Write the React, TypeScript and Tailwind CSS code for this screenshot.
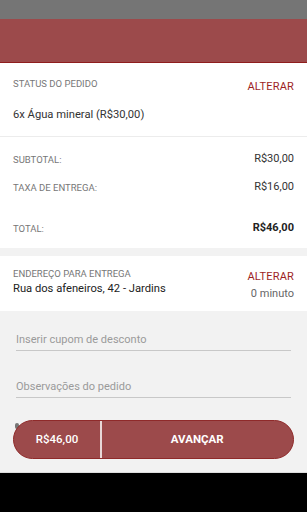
import React from "react";

export default function App() {
  return (
    <div
      className="w-[307px] h-[512px] bg-[#f2f2f2] flex flex-col overflow-hidden"
      style={{ fontFamily: "Roboto, 'Liberation Sans', sans-serif" }}
    >
      <div className="h-[19px] bg-[#757575] shrink-0" />
      <div className="h-[44px] bg-[#9c4a4b] border-b-[1.5px] border-[#8f1d1d] shrink-0" />
      {/* Status section */}
      <div className="bg-white px-[13px] shrink-0">
        <div className="flex justify-between items-start pt-[15px]">
          <span className="text-[9.5px] text-[#777] leading-[12px]">STATUS DO PEDIDO</span>
          <span className="text-[11px] text-[#9e1f1f] leading-[12px] mt-[3px] tracking-[0.2px]">ALTERAR</span>
        </div>
        <div className="text-[11.2px] text-[#333] leading-[14px] mt-[15px] pb-[14px]">6x Água mineral (R$30,00)</div>
      </div>
      <div className="h-px bg-[#ececec] shrink-0" />
      {/* Totals */}
      <div className="bg-white px-[13px] pt-[14px] pb-[12px] shrink-0">
        <div className="flex justify-between items-center h-[16px]">
          <span className="text-[9.5px] text-[#777] mt-[3px]">SUBTOTAL:</span>
          <span className="text-[11px] text-[#333]">R$30,00</span>
        </div>
        <div className="flex justify-between items-center h-[16px] mt-[12px]">
          <span className="text-[9.5px] text-[#777] mt-[3px]">TAXA DE ENTREGA:</span>
          <span className="text-[11px] text-[#333]">R$16,00</span>
        </div>
        <div className="flex justify-between items-center h-[16px] mt-[25px]">
          <span className="text-[9.5px] text-[#777] mt-[2px]">TOTAL:</span>
          <span className="text-[11px] text-[#222] font-bold">R$46,00</span>
        </div>
      </div>
      <div className="h-[8px] shrink-0" />
      {/* Address */}
      <div className="bg-white px-[13px] pt-[12px] pb-[11px] flex justify-between shrink-0">
        <div className="flex flex-col">
          <span className="text-[9.5px] text-[#777] leading-[12px]">ENDEREÇO PARA ENTREGA</span>
          <span className="text-[11.2px] text-[#222] leading-[14px] mt-[2px]">Rua dos afeneiros, 42 - Jardins</span>
        </div>
        <div className="flex flex-col items-end">
          <span className="text-[11px] text-[#9e1f1f] leading-[13px] mt-[2px] tracking-[0.2px]">ALTERAR</span>
          <span className="text-[11px] text-[#666] leading-[13px] mt-[4px]">0 minuto</span>
        </div>
      </div>
      {/* Inputs */}
      <div className="px-[16px] pt-[22px] flex flex-col shrink-0">
        <div className="border-b border-[#c8c8c8] pb-[3px] text-[11px] text-[#9a9a9a] leading-[14px]">
          Inserir cupom de desconto
        </div>
        <div className="border-b border-[#c8c8c8] pb-[3px] text-[11px] text-[#9a9a9a] leading-[14px] mt-[29px]">
          Observações do pedido
        </div>
      </div>
      <div className="relative px-[13px] mt-[22px] shrink-0">
        <div className="absolute left-[15px] top-[3px] w-[4px] h-[6px] bg-[#777] rounded-sm" />
        <div className="relative flex h-[39px] w-[281px] rounded-full overflow-hidden border border-[#8f2a2a] bg-[#9c4a4b]">
          <div className="w-[86px] flex items-center justify-center text-white text-[11.5px] font-medium">
            R$46,00
          </div>
          <div className="w-[1.5px] bg-[#e8d8d8]" />
          <div className="flex-1 flex items-center justify-center text-white text-[11.5px] font-bold">
            AVANÇAR
          </div>
        </div>
      </div>
      <div className="flex-1" />
      <div className="h-px bg-[#dcdcdc] shrink-0" />
      <div className="h-[39px] bg-black shrink-0" />
    </div>
  );
}
